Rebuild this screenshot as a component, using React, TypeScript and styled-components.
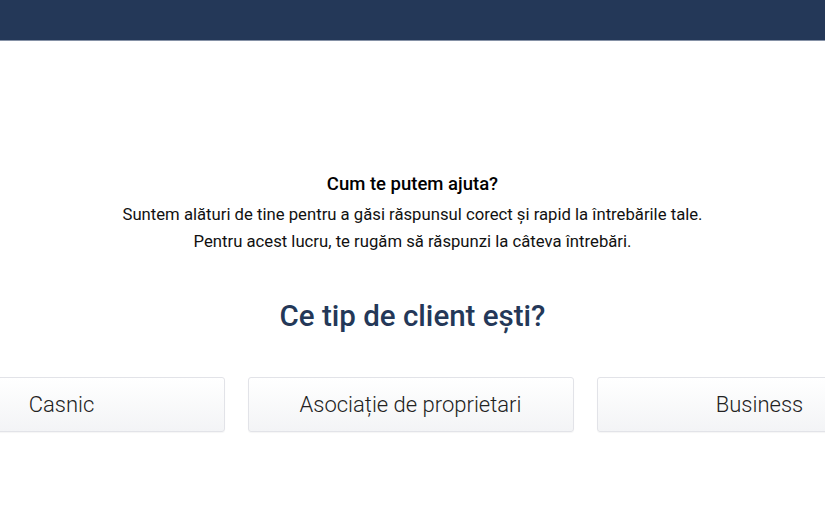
import React from "react";
import styled, { createGlobalStyle } from "styled-components";

const GlobalStyle = createGlobalStyle`
    html, body {
        margin: 0;
        padding: 0;
        background: #ffffff;
        font-family: Roboto, "Liberation Sans", sans-serif;
        overflow-x: hidden;
    }
`;

const Header = styled.header`
    height: 40px;
    background: #243858;
    border-bottom: 1px solid #8591a6;
`;

const Main = styled.main`
    display: flex;
    flex-direction: column;
    align-items: center;
    padding-top: 130px;
`;

const Intro = styled.div`
    text-align: center;
    color: #111111;
    font-size: 16.7px;
    line-height: 27px;
`;

const IntroTitle = styled.div`
    font-size: 18.5px;
    font-weight: 500;
    color: #000000;
    margin-bottom: 3px;
`;

const Question = styled.h2`
    margin: 44px 0 0;
    font-size: 29.5px;
    font-weight: 500;
    color: #243858;
    line-height: 34px;
`;

const OptionRow = styled.div`
    width: 100%;
    box-sizing: border-box;
    display: flex;
    justify-content: center;
    gap: 23px;
    margin-top: 42px;
    overflow: hidden;
    padding: 2px 4px 2px 0;
`;

const OptionButton = styled.button`
    flex: 0 0 326px;
    height: 55px;
    border: 1px solid #e2e3e8;
    border-radius: 3px;
    background: linear-gradient(to bottom, #ffffff, #f3f4f6);
    box-shadow: 0 1px 1px rgba(0, 0, 0, 0.04);
    font-family: Roboto, "Liberation Sans", sans-serif;
    font-size: 22px;
    font-weight: 300;
    color: #222222;
    cursor: pointer;
`;

const options = ["Casnic", "Asociație de proprietari", "Business"];

const App = (): JSX.Element => {
    return (
        <>
            <GlobalStyle />
            <Header />
            <Main>
                <Intro>
                    <IntroTitle>Cum te putem ajuta?</IntroTitle>
                    <div>Suntem alături de tine pentru a găsi răspunsul corect și rapid la întrebările tale.</div>
                    <div>Pentru acest lucru, te rugăm să răspunzi la câteva întrebări.</div>
                </Intro>
                <Question>Ce tip de client ești?</Question>
                <OptionRow>
                    {options.map((option: string) => (
                        <OptionButton key={option}>{option}</OptionButton>
                    ))}
                </OptionRow>
            </Main>
        </>
    );
};

export default App;
